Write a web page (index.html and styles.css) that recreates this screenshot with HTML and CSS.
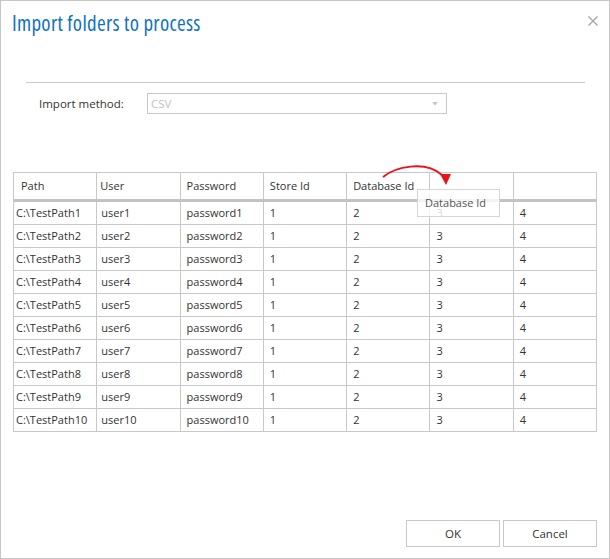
FILE: index.html
```html
<!DOCTYPE html>
<html>
<head>
<meta charset="utf-8">
<link rel="stylesheet" href="styles.css">
</head>
<body>
<div class="dialog">
  <div class="header">
    <h1 class="title">Import folders to process</h1>
    <svg class="close" width="10" height="10" viewBox="0 0 10 10"><path d="M0.5 0.5 L9.5 9.5 M9.5 0.5 L0.5 9.5" stroke="#a6a6a6" stroke-width="1.4" fill="none"/></svg>
  </div>
  <div class="rule"></div>
  <div class="method-row">
    <span class="label">Import method:</span>
    <div class="select">
      <span class="select-text">CSV</span>
      <svg class="caret" width="6" height="4" viewBox="0 0 6 4"><path d="M0 0 L6 0 L3 3.5 Z" fill="#c4c4c4"/></svg>
    </div>
  </div>
  <div class="grid">
    <div class="hcell c1">Path</div>
    <div class="hcell c2">User</div>
    <div class="hcell">Password</div>
    <div class="hcell">Store Id</div>
    <div class="hcell">Database Id</div>
    <div class="hcell"></div>
    <div class="hcell"></div>
    <div class="bar"></div>

    <div class="cell c1">C:\TestPath1</div><div class="cell c2">user1</div><div class="cell">password1</div><div class="cell">1</div><div class="cell">2</div><div class="cell">3</div><div class="cell">4</div>
    <div class="cell c1">C:\TestPath2</div><div class="cell c2">user2</div><div class="cell">password2</div><div class="cell">1</div><div class="cell">2</div><div class="cell">3</div><div class="cell">4</div>
    <div class="cell c1">C:\TestPath3</div><div class="cell c2">user3</div><div class="cell">password3</div><div class="cell">1</div><div class="cell">2</div><div class="cell">3</div><div class="cell">4</div>
    <div class="cell c1">C:\TestPath4</div><div class="cell c2">user4</div><div class="cell">password4</div><div class="cell">1</div><div class="cell">2</div><div class="cell">3</div><div class="cell">4</div>
    <div class="cell c1">C:\TestPath5</div><div class="cell c2">user5</div><div class="cell">password5</div><div class="cell">1</div><div class="cell">2</div><div class="cell">3</div><div class="cell">4</div>
    <div class="cell c1">C:\TestPath6</div><div class="cell c2">user6</div><div class="cell">password6</div><div class="cell">1</div><div class="cell">2</div><div class="cell">3</div><div class="cell">4</div>
    <div class="cell c1">C:\TestPath7</div><div class="cell c2">user7</div><div class="cell">password7</div><div class="cell">1</div><div class="cell">2</div><div class="cell">3</div><div class="cell">4</div>
    <div class="cell c1">C:\TestPath8</div><div class="cell c2">user8</div><div class="cell">password8</div><div class="cell">1</div><div class="cell">2</div><div class="cell">3</div><div class="cell">4</div>
    <div class="cell c1">C:\TestPath9</div><div class="cell c2">user9</div><div class="cell">password9</div><div class="cell">1</div><div class="cell">2</div><div class="cell">3</div><div class="cell">4</div>
    <div class="cell c1">C:\TestPath10</div><div class="cell c2">user10</div><div class="cell">password10</div><div class="cell">1</div><div class="cell">2</div><div class="cell">3</div><div class="cell">4</div>
  </div>
  <div class="footer">
    <button class="btn">OK</button>
    <button class="btn">Cancel</button>
  </div>

  <svg class="drag-arrow" width="75" height="30" viewBox="0 0 75 30">
    <path d="M3 17 C15 7 45 0 62 15" stroke="#e8141c" stroke-width="2" fill="none"/>
    <path d="M60 14 L71 14 L66 25 Z" fill="#e8141c"/>
  </svg>
  <div class="drag-ghost">Database Id</div>
</div>
</body>
</html>
```

FILE: styles.css
```css
html, body {
  margin: 0;
  padding: 0;
  background: #ffffff;
}

.dialog {
  position: relative;
  box-sizing: border-box;
  width: 610px;
  height: 559px;
  border: 1px solid #c6c6c6;
  background: #ffffff;
  display: flex;
  flex-direction: column;
  font-family: "Open Sans", "Noto Sans", sans-serif;
  color: #333333;
}

.header {
  display: flex;
  justify-content: space-between;
  align-items: flex-start;
  padding: 8px 11px 0 11px;
}

.title {
  margin: 0;
  font-family: "Open Sans", sans-serif;
  font-weight: normal;
  font-size: 21px;
  font-stretch: 75%;
  letter-spacing: 0.3px;
  line-height: 28px;
  color: #0f72c4;
}

.close {
  display: block;
  margin-top: 7px;
}

.rule {
  margin: 45px 24px 0 25px;
  border-top: 1px solid #c8c8c8;
}

.method-row {
  display: flex;
  align-items: center;
  margin: 10px 0 0 38px;
  height: 21px;
}

.label {
  width: 108px;
  font-size: 11.5px;
  color: #333333;
}

.select {
  box-sizing: border-box;
  width: 300px;
  height: 21px;
  border: 1px solid #c8c8c8;
  display: flex;
  align-items: center;
  justify-content: space-between;
  padding: 0 8px 0 3px;
}

.select-text {
  font-size: 11.5px;
  color: #c2c2c2;
}

.caret {
  display: block;
}

.grid {
  margin: 58px 0 0 12px;
  width: 584px;
  box-sizing: border-box;
  display: grid;
  grid-template-columns: repeat(7, 1fr);
  border-left: 1px solid #c8c8c8;
  border-top: 1px solid #c8c8c8;
}

.hcell {
  box-sizing: border-box;
  height: 26px;
  border-right: 1px solid #c8c8c8;
  padding-left: 6px;
  font-size: 11px;
  line-height: 26px;
  white-space: nowrap;
  overflow: hidden;
}

.bar {
  grid-column: 1 / -1;
  height: 3px;
  background: #c3c3c3;
}

.cell {
  box-sizing: border-box;
  height: 23px;
  border-right: 1px solid #c8c8c8;
  border-bottom: 1px solid #c8c8c8;
  padding-left: 6px;
  font-size: 11px;
  line-height: 22px;
  white-space: nowrap;
  overflow: hidden;
}

.hcell.c1 {
  padding-left: 7px;
}

.cell.c1 {
  padding-left: 2px;
}

.hcell.c2 {
  padding-left: 3px;
}

.cell.c2 {
  padding-left: 4px;
}

.footer {
  margin-top: auto;
  display: flex;
  justify-content: flex-end;
  gap: 3px;
  padding: 0 12px 11px 0;
}

.btn {
  box-sizing: border-box;
  width: 94px;
  height: 27px;
  border: 1px solid #c8c8c8;
  background: #ffffff;
  font-family: "Open Sans", "Noto Sans", sans-serif;
  font-size: 11.5px;
  color: #333333;
  padding: 0;
}

.drag-arrow {
  position: absolute;
  left: 379px;
  top: 159px;
}

.drag-ghost {
  position: absolute;
  left: 416px;
  top: 188px;
  box-sizing: border-box;
  width: 83px;
  height: 28px;
  border: 1px solid #d6d6d6;
  background: rgba(255, 255, 255, 0.8);
  padding-left: 7px;
  font-size: 11px;
  line-height: 26px;
  color: #555555;
}
```
